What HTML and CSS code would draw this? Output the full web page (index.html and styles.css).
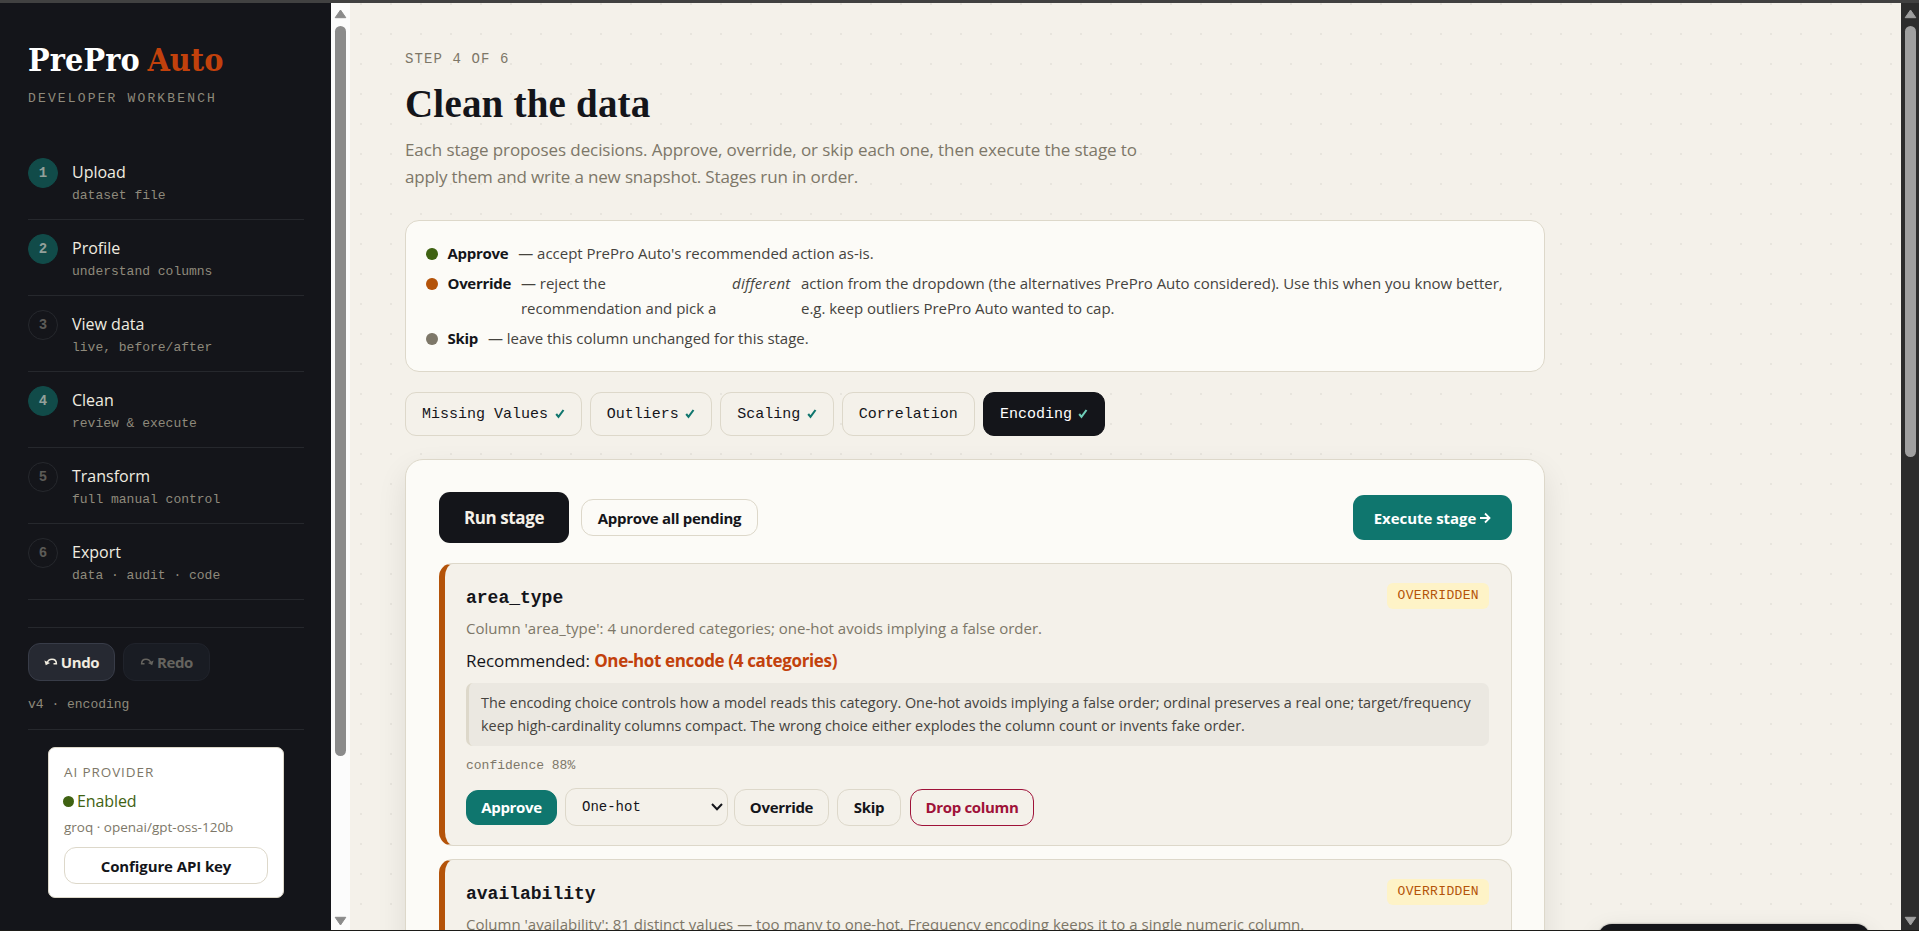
FILE: index.html
```html
<!DOCTYPE html>
<html lang="en">
<head>
  <meta charset="UTF-8" />
  <meta name="viewport" content="width=device-width, initial-scale=1" />
  <title>PrePro Auto</title>
  <link rel="stylesheet" href="styles.css">
</head>
<body>
  <div class="app">
    <aside class="sidebar">
      <div class="brand">PrePro <span>Auto</span></div>
      <div class="tagline">DEVELOPER WORKBENCH</div>

      <nav class="steps">
        <div class="step done">
          <div class="num">1</div>
          <div><div class="step-title">Upload</div><div class="step-sub">dataset file</div></div>
        </div>
        <div class="step done">
          <div class="num">2</div>
          <div><div class="step-title">Profile</div><div class="step-sub">understand columns</div></div>
        </div>
        <div class="step">
          <div class="num">3</div>
          <div><div class="step-title">View data</div><div class="step-sub">live, before/after</div></div>
        </div>
        <div class="step done">
          <div class="num">4</div>
          <div><div class="step-title">Clean</div><div class="step-sub">review &amp; execute</div></div>
        </div>
        <div class="step">
          <div class="num">5</div>
          <div><div class="step-title">Transform</div><div class="step-sub">full manual control</div></div>
        </div>
        <div class="step">
          <div class="num">6</div>
          <div><div class="step-title">Export</div><div class="step-sub">data · audit · code</div></div>
        </div>
      </nav>

      <div class="history">
        <div class="history-buttons">
          <button class="btn-dark">
            <svg width="14" height="8" viewBox="0 0 14 8"><path d="M3 5C4 2.200 6 1.200 8 1.200c2.600 0 4.400 1.600 4.400 4.600H9.500" fill="none" stroke="currentColor" stroke-width="1.500"/><path d="M.4 2.600l1.400 4.600 4.200-2.200z" fill="currentColor"/></svg>
            Undo
          </button>
          <button class="btn-dark" disabled>
            <svg width="14" height="8" viewBox="0 0 14 8"><path d="M11 5C10 2.200 8 1.200 6 1.200 3.400 1.200 1.600 2.800 1.600 5.800h2.900" fill="none" stroke="currentColor" stroke-width="1.500"/><path d="M13.600 2.600L12.200 7.200 8 5z" fill="currentColor"/></svg>
            Redo
          </button>
        </div>
        <div class="version">v4 · encoding</div>
      </div>

      <div class="provider">
        <div class="provider-label">AI PROVIDER</div>
        <div class="provider-status"><i></i>Enabled</div>
        <div class="provider-model">groq · openai/gpt-oss-120b</div>
        <button class="btn">Configure API key</button>
      </div>
    </aside>

    <div class="scrollbar">
      <svg class="up" width="13" height="10" viewBox="0 0 13 10"><path d="M6.500 1L11.800 8.700H1.200z" fill="currentColor" stroke="currentColor" stroke-linejoin="round"/></svg>
      <div class="thumb thumb-side"></div>
      <svg class="down" width="13" height="10" viewBox="0 0 13 10"><path d="M6.500 9L1.200 1.300h10.600z" fill="currentColor" stroke="currentColor" stroke-linejoin="round"/></svg>
    </div>

    <main class="main">
      <div class="content">
        <div class="eyebrow">STEP 4 OF 6</div>
        <h1>Clean the data</h1>
        <p class="lead">Each stage proposes decisions. Approve, override, or skip each one, then execute the stage to<br><span class="lead-end">apply them and write a new snapshot. Stages run in order.</span></p>

        <div class="legend">
          <div class="legend-row"><i class="dot green"></i><b>Approve</b><span>— accept PrePro Auto's recommended action as-is.</span></div>
          <div class="legend-row"><i class="dot orange"></i><b>Override</b><span class="reject">— reject the<br>recommendation and pick a</span><em>different</em><span>action from the dropdown (the alternatives PrePro Auto considered). Use this when you know better,<br>e.g. keep outliers PrePro Auto wanted to cap.</span></div>
          <div class="legend-row"><i class="dot gray"></i><b>Skip</b><span>— leave this column unchanged for this stage.</span></div>
        </div>

        <div class="tabs">
          <div class="tab"><span>Missing Values</span><svg width="10" height="10" viewBox="0 0 10 10"><path d="M1.200 5l2.300 2.800L8.500 1" fill="none" stroke="currentColor" stroke-width="2.100"/></svg></div>
          <div class="tab"><span>Outliers</span><svg width="10" height="10" viewBox="0 0 10 10"><path d="M1.200 5l2.300 2.800L8.500 1" fill="none" stroke="currentColor" stroke-width="2.100"/></svg></div>
          <div class="tab"><span>Scaling</span><svg width="10" height="10" viewBox="0 0 10 10"><path d="M1.200 5l2.300 2.800L8.500 1" fill="none" stroke="currentColor" stroke-width="2.100"/></svg></div>
          <div class="tab"><span>Correlation</span></div>
          <div class="tab active"><span>Encoding</span><svg width="10" height="10" viewBox="0 0 10 10"><path d="M1.200 5l2.300 2.800L8.500 1" fill="none" stroke="currentColor" stroke-width="2.100"/></svg></div>
        </div>

        <section class="panel">
          <div class="toolbar">
            <button class="btn-run">Run stage</button>
            <button class="btn">Approve all pending</button>
            <button class="btn-execute">Execute stage<svg width="11" height="12" viewBox="0 0 11 12"><path d="M0 6h9M5 1.500L9.500 6 5 10.500" fill="none" stroke="currentColor" stroke-width="1.800"/></svg></button>
          </div>

          <article class="decision">
            <div class="decision-head"><h3>area_type</h3><span class="badge">OVERRIDDEN</span></div>
            <p class="desc">Column 'area_type': 4 unordered categories; one-hot avoids implying a false order.</p>
            <p class="recommend">Recommended: <b>One-hot encode (4 categories)</b></p>
            <div class="explain">The encoding choice controls how a model reads this category. One-hot avoids implying a false order; ordinal preserves a real one; target/frequency<br>keep high-cardinality columns compact. The wrong choice either explodes the column count or invents fake order.</div>
            <div class="confidence">confidence 88%</div>
            <div class="actions">
              <button class="btn btn-approve">Approve</button>
              <div class="select">One-hot<svg width="12" height="8" viewBox="0 0 12 8"><path d="M1 1l5 5.200L11 1" fill="none" stroke="currentColor" stroke-width="2"/></svg></div>
              <button class="btn btn-override">Override</button>
              <button class="btn btn-skip">Skip</button>
              <button class="btn btn-drop">Drop column</button>
            </div>
          </article>

          <article class="decision">
            <div class="decision-head"><h3>availability</h3><span class="badge">OVERRIDDEN</span></div>
            <p class="desc">Column 'availability': 81 distinct values — too many to one-hot. Frequency encoding keeps it to a single numeric column.</p>
          </article>
        </section>
      </div>
      <div class="toast"></div>
    </main>

    <div class="scrollbar page-bar">
      <svg class="up" width="13" height="10" viewBox="0 0 13 10"><path d="M6.500 1L11.800 8.700H1.200z" fill="currentColor" stroke="currentColor" stroke-linejoin="round"/></svg>
      <div class="thumb thumb-page"></div>
      <svg class="down" width="13" height="10" viewBox="0 0 13 10"><path d="M6.500 9L1.200 1.300h10.600z" fill="currentColor" stroke="currentColor" stroke-linejoin="round"/></svg>
    </div>
  </div>
</body>
</html>
```
FILE: styles.css
```css
:root {
  --ink: #14151a;
  --paper: #f4f1ea;
  --card: #fcfbf7;
  --line: #ddd8ca;
  --muted: #7d7768;
  --teal: #0f766e;
  --sans: "Open Sans", sans-serif;
  --mono: "Liberation Mono", monospace;
}
* {
  box-sizing: border-box;
}
body {
  margin: 0;
  height: 931px;
  overflow: hidden;
  background: var(--paper);
  color: var(--ink);
  font-family: var(--sans);
  border-top: 3px solid #414141;
  border-bottom: 1px solid #1c1b18;
}
h1, h3, p {
  margin: 0;
}
button {
  font-family: var(--sans);
  white-space: nowrap;
}
.app {
  display: grid;
  grid-template-columns: 331px 19px 1551px 18px;
  height: 927px;
}

/* sidebar */
.sidebar {
  background: var(--ink);
  padding: 35px 27px 0 28px;
  overflow: hidden;
}
.brand {
  font: 700 32px/44px "DejaVu Serif Condensed", "DejaVu Serif", serif;
  color: #fff;
  letter-spacing: 0.1px;
  word-spacing: -2.5px;
  white-space: nowrap;
}
.brand span {
  color: #c2410c;
}
.tagline {
  font: 13px/20px var(--mono);
  letter-spacing: 2.15px;
  color: #8f8a7c;
  margin-top: 7px;
  white-space: nowrap;
}
.steps {
  margin-top: 35px;
}
.step {
  display: flex;
  gap: 14px;
  height: 76px;
  padding-top: 14px;
  border-bottom: 1px solid #26282d;
}
.num {
  width: 30px;
  height: 30px;
  border-radius: 50%;
  border: 1px solid #26282d;
  font: 600 14px/28px var(--mono);
  text-align: center;
  color: #5c5b57;
}
.done .num {
  background: #114b49;
  border-color: #114b49;
  color: #93a09a;
}
.step-title {
  font-size: 16px;
  line-height: 25px;
  margin-top: 2px;
  color: #f0ece0;
}
.step-sub {
  font: 13px/18px var(--mono);
  color: #8f8a7c;
  margin-top: 2px;
}
.history {
  margin-top: 27px;
  padding: 15px 0 0;
  height: 103px;
  border-top: 1px solid #26282d;
  border-bottom: 1px solid #26282d;
}
.history-buttons {
  display: flex;
  gap: 8px;
}
.btn-dark {
  display: flex;
  align-items: center;
  justify-content: center;
  gap: 3px;
  width: 87px;
  height: 38px;
  padding: 0;
  border-radius: 12px;
  border: 1px solid #383c48;
  background: #262932;
  color: #f0ece0;
  font-size: 15px;
  font-weight: 700;
  letter-spacing: -0.4px;
}
.btn-dark:disabled {
  background: #191c23;
  border-color: #20232b;
  color: #66645f;
}
.version {
  font: 13px/20px var(--mono);
  color: #8f8a7c;
  margin-top: 14px;
}
.provider {
  width: 236px;
  height: 151px;
  margin: 17px 0 0 20px;
  padding: 15px;
  background: #fff;
  border: 1px solid var(--line);
  border-radius: 7px;
}
.provider-label {
  font-size: 13.5px;
  line-height: 18px;
  letter-spacing: 0.9px;
  color: var(--muted);
}
.provider-status {
  display: flex;
  align-items: center;
  gap: 3px;
  font-size: 16px;
  line-height: 22px;
  letter-spacing: -0.1px;
  margin: 9px 0 0 -1px;
  color: #3f6212;
}
.provider-status i {
  width: 11px;
  height: 11px;
  border-radius: 50%;
  background: #3f6212;
}
.provider-model {
  font-size: 13.5px;
  line-height: 20px;
  margin-top: 5px;
  color: var(--muted);
  white-space: nowrap;
}
.provider .btn {
  width: 100%;
  margin-top: 10px;
  letter-spacing: -0.1px;
}

/* scrollbars */
.scrollbar {
  display: flex;
  flex-direction: column;
  align-items: center;
  background: #fcfcfc;
  color: #8b8b8b;
  padding: 6px 0 4px;
}
.up {
  margin-bottom: 7px;
}
.down {
  margin-top: auto;
}
.thumb {
  width: 11px;
  border-radius: 6px;
  background: currentColor;
}
.thumb-side {
  height: 730px;
}
.thumb-page {
  height: 431px;
}
.page-bar {
  background: #2c2c2c;
  color: #9f9f9f;
}

/* main */
.main {
  position: relative;
  overflow: hidden;
  background-image: radial-gradient(circle at 1px 1px, #e8e5de 1px, transparent 1.2px);
  background-size: 30px 30px;
  background-position: -350px 0;
}
.content {
  width: 1195px;
  padding: 45px 0 0 55px;
}
.eyebrow {
  font: 14px/22px var(--mono);
  letter-spacing: 1.1px;
  color: var(--muted);
}
h1 {
  font: 700 39px/46px "Liberation Serif", serif;
  letter-spacing: 0.2px;
  margin-top: 11px;
}
.lead {
  font-size: 17px;
  line-height: 27.2px;
  letter-spacing: -0.086px;
  color: var(--muted);
  margin-top: 9px;
  white-space: nowrap;
}
.lead-end {
  letter-spacing: -0.16px;
}
.legend {
  display: flex;
  flex-direction: column;
  gap: 5px;
  height: 152px;
  margin-top: 30px;
  padding: 20px;
  background: var(--card);
  border: 1px solid var(--line);
  border-radius: 14px;
}
.legend-row {
  display: flex;
  gap: 10px;
  font-size: 15px;
  line-height: 25px;
  letter-spacing: -0.02px;
  color: #45433e;
  white-space: nowrap;
}
.legend-row b {
  color: var(--ink);
  font-weight: 700;
  letter-spacing: -0.3px;
}
.legend-row em {
  width: 59px;
  letter-spacing: 0.25px;
}
.reject {
  width: 201px;
}
.dot {
  width: 11.5px;
  height: 12px;
  margin-top: 7px;
  border-radius: 50%;
}
.green { background: #3f6212; }
.orange { background: #b45309; }
.gray { background: #7d7768; }
.tabs {
  display: flex;
  gap: 8px;
  margin-top: 20px;
}
.tab {
  display: flex;
  align-items: center;
  height: 44px;
  padding: 0 16px;
  border: 1px solid var(--line);
  border-radius: 11px;
  background: var(--paper);
  font: 15px/20px var(--mono);
}
.tab span {
  padding-top: 2px;
}
.tab svg {
  margin-left: 6.6px;
  color: var(--teal);
}
.tab.active {
  background: var(--ink);
  border-color: var(--ink);
  color: #fff;
}
.tab.active svg {
  color: #6fcdb8;
}

.panel {
  margin-top: 23px;
  height: 800px;
  padding: 32px 32px 0 33px;
  background: var(--card);
  border: 1px solid var(--line);
  border-radius: 18px;
  box-shadow: 0 12px 30px rgba(20, 21, 26, 0.09);
}
.toolbar {
  display: flex;
  align-items: center;
  height: 51px;
}
.btn {
  height: 37px;
  padding: 0 15px;
  border: 1px solid var(--line);
  border-radius: 12px;
  background: transparent;
  color: var(--ink);
  font-size: 15px;
  font-weight: 700;
  letter-spacing: -0.32px;
}
.btn-run {
  width: 130px;
  height: 51px;
  border: 0;
  border-radius: 11px;
  background: var(--ink);
  color: #f4f0e8;
  font-size: 17px;
  font-weight: 700;
  letter-spacing: -0.4px;
}
.toolbar .btn {
  width: 177px;
  margin-left: 12px;
}
.btn-execute {
  display: flex;
  align-items: center;
  justify-content: center;
  gap: 4px;
  width: 159px;
  height: 45px;
  margin-left: auto;
  border: 0;
  border-radius: 11px;
  background: var(--teal);
  color: #fff;
  font-size: 15px;
  font-weight: 700;
  letter-spacing: -0.05px;
}
.decision {
  height: 283px;
  margin-top: 20px;
  padding: 20px 22px 0 21px;
  background: var(--paper);
  border: 1px solid var(--line);
  border-left: 6px solid #b45309;
  border-radius: 14px;
}
.decision + .decision {
  margin-top: 13px;
}
.decision-head {
  display: flex;
  justify-content: space-between;
  height: 28px;
}
h3 {
  font: 700 18px/28px var(--mono);
}
.badge {
  height: 26px;
  margin-top: -1px;
  padding: 0 10px;
  border-radius: 6px;
  background: #fef3c7;
  color: #b45309;
  font: 13px/26px var(--mono);
  letter-spacing: 0.35px;
}
.desc {
  font-size: 15px;
  line-height: 24px;
  letter-spacing: 0.015px;
  margin-top: 4px;
  color: var(--muted);
  white-space: nowrap;
}
.recommend {
  font-size: 17px;
  line-height: 27px;
  margin-top: 7px;
  letter-spacing: -0.07px;
}
.recommend b {
  color: #c2410c;
  font-weight: 700;
  letter-spacing: -0.35px;
}
.explain {
  height: 63px;
  margin-top: 9px;
  padding: 8px 12px;
  background: #ebe8e1;
  border-left: 3px solid var(--line);
  border-radius: 7px;
  font-size: 14.4px;
  line-height: 23px;
  color: #45433e;
  white-space: nowrap;
}
.confidence {
  font: 13px/20px var(--mono);
  margin-top: 10px;
  color: var(--muted);
}
.actions {
  display: flex;
  align-items: center;
  margin-top: 12px;
}
.actions .btn {
  padding: 0;
}
.actions .btn-approve {
  width: 91px;
  height: 35px;
  background: var(--teal);
  border-color: var(--teal);
  color: #fff;
}
.select {
  display: flex;
  align-items: center;
  justify-content: space-between;
  width: 163px;
  height: 38px;
  margin: 0 6px 0 8px;
  padding: 0 4px 0 16px;
  border: 1px solid var(--line);
  border-radius: 11px;
  font: 14px/20px var(--mono);
}
.btn-override {
  width: 95px;
}
.btn-skip {
  width: 64px;
  margin: 0 9px 0 8px;
}
.actions .btn-drop {
  width: 124px;
  border-color: #9f1239;
  color: #9f1239;
}
.toast {
  position: absolute;
  left: 1248px;
  top: 921px;
  width: 272px;
  height: 60px;
  border-radius: 14px;
  background: var(--ink);
  box-shadow: 0 0 2px rgba(20, 21, 26, 0.5), 0 8px 24px rgba(20, 21, 26, 0.12);
}
```
